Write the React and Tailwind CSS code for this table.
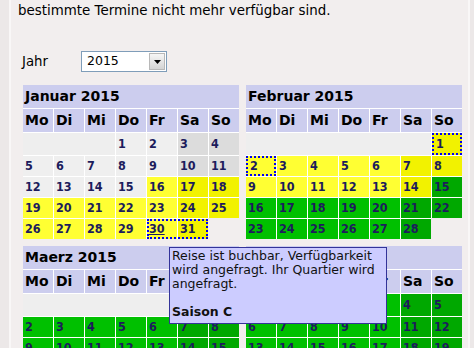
import React from 'react'

const BLANK_W = { 2: 'w-[61px]', 3: 'w-[92px]', 6: 'w-[185px]' }

const BG = {
  g: ['bg-[#efefef]', 'bg-[#dcdcdc]'],
  y: ['bg-[#ffff33]', 'bg-[#f2f200]'],
  n: ['bg-[#00c000]', 'bg-[#00a800]'],
}

const months = [
  { name: 'Januar 2015', offset: 3, days: 31, kind: (d) => (d <= 15 ? 'g' : 'y'), group: [30, 31] },
  { name: 'Februar 2015', offset: 6, days: 28, kind: (d) => (d <= 14 ? 'y' : 'n'), dotted: [1, 2] },
  { name: 'Maerz 2015', offset: 6, days: 31, kind: () => 'n' },
  { name: 'April 2015', offset: 2, days: 30, kind: () => 'n' },
]

const dayNames = ['Mo', 'Di', 'Mi', 'Do', 'Fr', 'Sa', 'So']

function buildRows(m) {
  const rows = []
  let row = []
  let col = m.offset
  for (let d = 1; d <= m.days; d++) {
    row.push({ d, col })
    col++
    if (col === 7) {
      rows.push(row)
      row = []
      col = 0
    }
  }
  if (row.length) rows.push(row)
  return rows
}

function DayCell({ m, d, col }) {
  const weekend = col >= 5 ? 1 : 0
  const bg = BG[m.kind(d)][weekend]
  const dotted = m.dotted && m.dotted.includes(d)
  const under = m.group && d === m.group[0]
  return (
    <div
      className={`w-[30px] h-full flex items-center pl-[2px] ${bg} ${
        dotted ? 'border-2 border-dotted border-[#0000ee] pl-0' : ''
      }`}
    >
      <span className={`text-[#1c1c5c] ${under ? 'underline' : ''}`}>{d}</span>
    </div>
  )
}

function Month({ m }) {
  const rows = buildRows(m)
  return (
    <div className="flex flex-col w-[216px] font-['DejaVu_Sans',sans-serif]">
      <div className="h-[23px] bg-[#cccdee] flex items-center pl-[2px] text-[14px] font-bold text-black">
        {m.name}
      </div>
      <div className="flex gap-px bg-white pt-px w-fit">
        {dayNames.map((n) => (
          <div key={n} className="w-[30px] h-[23px] bg-[#cccdee] flex items-center pl-[2px] text-[14px] font-bold text-black">
            {n}
          </div>
        ))}
      </div>
      {rows.map((row, i) => {
        const cells = []
        if (i === 0 && m.offset > 0) {
          cells.push(<div key="blank" className={`${BLANK_W[m.offset]} h-full bg-[#eeeeee]`} />)
        }
        let k = 0
        while (k < row.length) {
          const c = row[k]
          if (m.group && c.d === m.group[0]) {
            const c2 = row[k + 1]
            cells.push(
              <div key={c.d} className="relative flex gap-px h-full">
                <DayCell m={m} d={c.d} col={c.col} />
                <DayCell m={m} d={c2.d} col={c2.col} />
                <div className="absolute inset-0 border-2 border-dotted border-[#0000ee]" />
              </div>
            )
            k += 2
            continue
          }
          cells.push(<DayCell key={c.d} m={m} d={c.d} col={c.col} />)
          k++
        }
        return (
          <div
            key={i}
            className={`flex gap-px bg-white pt-px w-fit font-['DejaVu_Sans_Condensed','DejaVu_Sans',sans-serif] text-[12.5px] font-bold ${
              i === 0 ? 'h-[23px]' : 'h-[21px]'
            }`}
          >
            {cells}
          </div>
        )
      })}
    </div>
  )
}

export default function App() {
  return (
    <div className="min-h-screen bg-[#ece8e8] font-['DejaVu_Sans',sans-serif]">
      <div className="ml-[9px] w-[461px] min-h-screen border-x-2 border-[#f9f7f7] bg-[#f2eeee]">
        <p className="pl-[7px] pt-px text-[13.4px] leading-[19px] text-black">
          bestimmte Termine nicht mehr verfügbar sind.
        </p>

        {/* Jahr auswahl */}
        <div className="mt-[31px] pl-[11px] flex items-center h-[21px]">
          <span className="w-[59px] text-[13.3px] text-black">Jahr</span>
          <div className="w-[86px] h-[21px] border border-[#7f9db9] bg-white flex items-center">
            <span className="pl-[5px] text-[12.5px] text-black">2015</span>
            <div className="ml-auto mr-px w-[16px] h-[17px] border border-[#b8b8b8] bg-gradient-to-b from-[#f6f6f6] to-[#d4d4d4] flex items-center justify-center">
              <svg width="7" height="4" viewBox="0 0 7 4">
                <path d="M0 0h7L3.5 4z" fill="#000" />
              </svg>
            </div>
          </div>
        </div>

        {/* Kalender */}
        <div className="relative mt-[13px] pl-[12px] grid grid-cols-[216px_216px] gap-x-[7px] gap-y-[7px]">
          {months.map((m) => (
            <Month key={m.name} m={m} />
          ))}

          {/* Tooltip */}
          <div className="absolute z-10 left-[158px] top-[162px] w-[218px] h-[77px] border border-[#333399] bg-[#ccccff] px-[2px] pt-px text-[12.5px] leading-[14px] text-[#111]">
            <p>
              Reise ist buchbar, Verfügbarkeit
              <br />
              wird angefragt. Ihr Quartier wird
              <br />
              angefragt.
            </p>
            <p className="mt-[14px] font-bold">Saison C</p>
          </div>
        </div>
      </div>
    </div>
  )
}
